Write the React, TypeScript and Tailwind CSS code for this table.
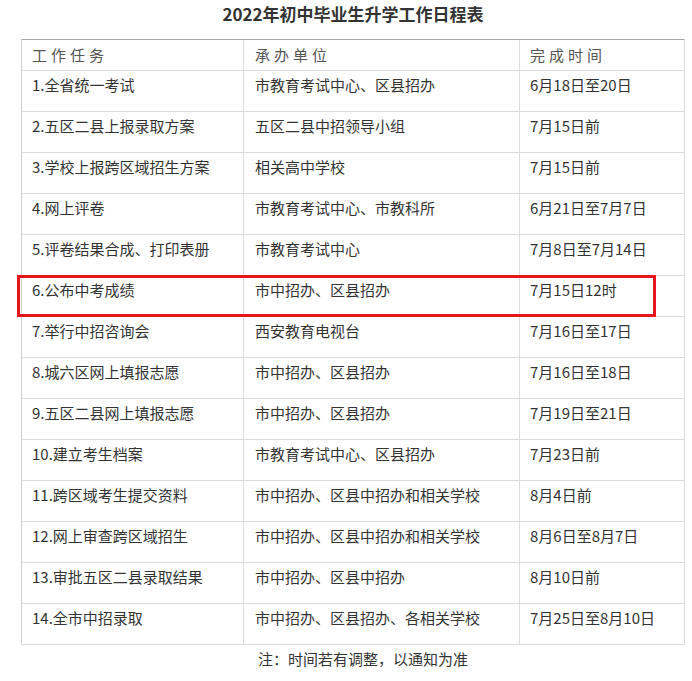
const rows: [string, string, string][] = [
  ["1.全省统一考试", "市教育考试中心、区县招办", "6月18日至20日"],
  ["2.五区二县上报录取方案", "五区二县中招领导小组", "7月15日前"],
  ["3.学校上报跨区域招生方案", "相关高中学校", "7月15日前"],
  ["4.网上评卷", "市教育考试中心、市教科所", "6月21日至7月7日"],
  ["5.评卷结果合成、打印表册", "市教育考试中心", "7月8日至7月14日"],
  ["6.公布中考成绩", "市中招办、区县招办", "7月15日12时"],
  ["7.举行中招咨询会", "西安教育电视台", "7月16日至17日"],
  ["8.城六区网上填报志愿", "市中招办、区县招办", "7月16日至18日"],
  ["9.五区二县网上填报志愿", "市中招办、区县招办", "7月19日至21日"],
  ["10.建立考生档案", "市教育考试中心、区县招办", "7月23日前"],
  ["11.跨区域考生提交资料", "市中招办、区县中招办和相关学校", "8月4日前"],
  ["12.网上审查跨区域招生", "市中招办、区县中招办和相关学校", "8月6日至8月7日"],
  ["13.审批五区二县录取结果", "市中招办、区县中招办", "8月10日前"],
  ["14.全市中招录取", "市中招办、区县招办、各相关学校", "7月25日至8月10日"],
];

const font = {
  fontFamily: '"Noto Sans CJK SC", "Noto Sans", sans-serif',
};

function App() {
  return (
    <div className="min-h-[681px] w-[692px] bg-white text-[#333]" style={font}>
      <h1 className="pl-[14px] pt-[2px] text-center text-[17px] font-bold leading-[24px] text-[#333]">
        2022年初中毕业生升学工作日程表
      </h1>

      <div className="relative ml-[21px] mt-[13px] w-[664px]">
        <div className="border-l border-r border-t border-l-[#cfcfcf] border-r-[#dcdcdc] border-t-[#a8a8a8]">
          <div className="grid h-[31px] grid-cols-[222px_276px_164px] border-b border-[#dcdcdc] text-[15px] tracking-[4px] text-[#555]">
            <div className="flex items-center border-r border-[#dcdcdc] pl-[10px]">工作任务</div>
            <div className="flex items-center border-r border-[#dcdcdc] pl-[11px]">承办单位</div>
            <div className="flex items-center pl-[10px]">完成时间</div>
          </div>
          {rows.map(([task, unit, time]) => (
            <div
              key={task}
              className="grid h-[41px] grid-cols-[222px_276px_164px] border-b border-[#dcdcdc] text-[15px] leading-[21px]"
            >
              <div className="border-r border-[#dcdcdc] pl-[10px] pt-[3px]">{task}</div>
              <div className="border-r border-[#dcdcdc] pl-[11px] pt-[3px]">{unit}</div>
              <div className="pl-[10px] pt-[3px]">{time}</div>
            </div>
          ))}
        </div>

        <div className="pointer-events-none absolute left-[-4px] top-[236px] h-[42px] w-[639px] border-[3px] border-[#e8141e]" />
      </div>

      <p className="pl-[34px] pt-[3px] text-center text-[15px] leading-[22px] text-[#333]">
        注：时间若有调整，以通知为准
      </p>
    </div>
  );
}

export default App;
